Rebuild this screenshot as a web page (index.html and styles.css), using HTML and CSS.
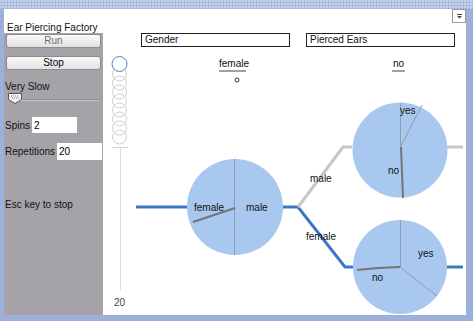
FILE: index.html
```html
<!DOCTYPE html>
<html lang="en">
<head>
  <meta charset="UTF-8">
  <title>Ear Piercing Factory</title>
  <link rel="stylesheet" href="styles.css">
</head>
<body>
  <div class="window">
    <div class="titlebar"></div>
    <div class="content">
      <div class="side">
        <div class="app-title">Ear Piercing Factory</div>
        <div class="panel">
          <button class="btn btn-off">Run</button>
          <button class="btn btn-stop">Stop</button>
          <div class="speed">Very Slow</div>
          <svg class="slider" width="95" height="11" viewBox="0 0 95 11">
            <line x1="2" y1="6.5" x2="92" y2="6.5" stroke="#8e8c90" stroke-width="1"/>
            <line x1="2" y1="7.5" x2="92" y2="7.5" stroke="#c4c2c6" stroke-width="1"/>
            <polygon points="0.5,0.5 13.5,0.5 13.5,6.5 7,10.5 0.5,6.5" fill="#f4f4f4" stroke="#555"/>
            <g fill="#777">
              <rect x="3" y="2.5" width="1" height="1"/><rect x="5" y="2.5" width="1" height="1"/>
              <rect x="7" y="2.5" width="1" height="1"/><rect x="9" y="2.5" width="1" height="1"/>
              <rect x="4" y="4.5" width="1" height="1"/><rect x="6" y="4.5" width="1" height="1"/>
              <rect x="8" y="4.5" width="1" height="1"/><rect x="10" y="4.5" width="1" height="1"/>
            </g>
          </svg>
          <label class="field">Spins<input class="num" value="2"></label>
          <label class="field field-reps">Repetitions<input class="num" value="20"></label>
          <div class="esc">Esc key to stop</div>
        </div>
      </div>

      <div class="main">
        <svg class="tree" width="363" height="306" viewBox="0 0 363 306">
          <!-- spin counter -->
          <g fill="none" stroke="#cfcfcf">
            <circle cx="16.5" cy="128" r="7"/>
            <circle cx="16.5" cy="119" r="7"/>
            <circle cx="16.5" cy="110" r="7"/>
            <circle cx="16.5" cy="101" r="7"/>
            <circle cx="16.5" cy="92" r="7"/>
            <circle cx="16.5" cy="83" r="7"/>
            <circle cx="16.5" cy="74" r="7"/>
            <circle cx="16.5" cy="65" r="7"/>
          </g>
          <circle cx="16.5" cy="55" r="7.5" fill="#fff" stroke="#4a86d0"/>
          <line x1="9" y1="138.5" x2="25" y2="138.5" stroke="#d4d4d4"/>
          <line x1="17.5" y1="138" x2="17.5" y2="282" stroke="#dedede"/>
          <text x="11" y="297" class="count">20</text>

          <!-- current values -->
          <text x="116" y="58">female</text>
          <line x1="116" y1="62" x2="143" y2="62" stroke="#a0a0a0" stroke-width="2"/>
          <circle cx="134" cy="71" r="2" fill="none" stroke="#333"/>
          <text x="290" y="58">no</text>
          <line x1="289" y1="62" x2="302" y2="62" stroke="#a0a0a0" stroke-width="2"/>

          <!-- branches -->
          <polyline points="33,198 84,198" class="edge-on"/>
          <polyline points="180,198 195,198 242,258 250,258" class="edge-on"/>
          <polyline points="195,198 240,138 249,138" class="edge-off"/>
          <polyline points="344,138 360,138" class="edge-off"/>
          <polyline points="344,258 360,258" class="edge-on"/>
          <text x="207" y="173">male</text>
          <text x="203" y="231">female</text>

          <!-- gender pie -->
          <circle cx="132" cy="198" r="48" class="pie"/>
          <line x1="131.5" y1="150" x2="131.5" y2="246" class="slice"/>
          <line x1="132" y1="199" x2="90" y2="213" class="needle"/>
          <text x="91" y="202">female</text>
          <text x="143" y="202">male</text>

          <!-- pierced ears, male -->
          <circle cx="297" cy="141" r="47.5" class="pie"/>
          <line x1="297.5" y1="141" x2="297.5" y2="94" class="slice"/>
          <line x1="297.5" y1="138" x2="319" y2="96" class="slice"/>
          <line x1="298" y1="138" x2="300" y2="189" class="needle"/>
          <text x="297" y="105">yes</text>
          <text x="285" y="165">no</text>

          <!-- pierced ears, female -->
          <circle cx="297" cy="258" r="47" class="pie"/>
          <line x1="297.5" y1="258" x2="297.5" y2="211" class="slice"/>
          <line x1="297" y1="258" x2="334" y2="287" class="slice"/>
          <polyline points="297,258 275,259 254,261" class="needle"/>
          <text x="315" y="248">yes</text>
          <text x="269" y="272">no</text>
        </svg>

        <div class="toolbar">
          <button class="menu-btn">
            <svg width="11" height="11" viewBox="0 0 11 11">
              <line x1="3" y1="3.5" x2="8" y2="3.5" stroke="#444"/>
              <polygon points="3,5 8,5 5.5,7.5" fill="#444"/>
            </svg>
          </button>
        </div>
        <div class="headers">
          <div class="attr">Gender</div>
          <div class="attr">Pierced Ears</div>
        </div>
      </div>
    </div>
  </div>
</body>
</html>
```

FILE: styles.css
```css
body {
  margin: 0;
  font-family: "Liberation Sans", Arial, sans-serif;
  font-size: 10px;
  color: #111;
}

.window {
  width: 473px;
  height: 321px;
  background: #9cb0da;
  display: flex;
  flex-direction: column;
}

.titlebar {
  height: 9px;
  background-color: #c2d0ec;
  background-image: radial-gradient(circle, #8aa2d4 0.7px, transparent 1.1px);
  background-size: 3px 3px;
  background-position: 0 1px;
}

.content {
  flex: 1;
  display: flex;
  margin: 0 7px 6px 4px;
  background: #fff;
}

.side {
  width: 99px;
  display: flex;
  flex-direction: column;
}

.app-title {
  height: 24px;
  box-sizing: border-box;
  padding: 13px 0 0 3px;
  line-height: 11px;
}

.panel {
  flex: 1;
  background: #a5a3a7;
  display: flex;
  flex-direction: column;
  padding: 0 2px 0 1px;
}

.btn {
  height: 14px;
  margin-top: 1px;
  margin-left: 1px;
  width: 95px;
  padding: 0;
  border: 1px solid #8d8b8f;
  border-radius: 3px;
  background: linear-gradient(#fbfbfb, #e2e2e2);
  font: inherit;
  line-height: 12px;
  color: #000;
}

.btn-off {
  color: #6d6d6d;
}

.btn-stop {
  margin-top: 8px;
}

.speed {
  margin-top: 11px;
  line-height: 12px;
}

.slider {
  display: block;
  margin-left: 3px;
}

.field {
  display: flex;
  align-items: center;
  margin-top: 13px;
  height: 16px;
}

.field-reps {
  margin-top: 10px;
  height: 17px;
}

.num {
  width: 45px;
  height: 100%;
  box-sizing: border-box;
  margin-left: 2px;
  border: none;
  padding: 0 2px;
  font: inherit;
  background: #fff;
}

.esc {
  margin-top: 39px;
  line-height: 12px;
}

.main {
  flex: 1;
  position: relative;
  display: flex;
  flex-direction: column;
}

.tree {
  position: absolute;
  left: 0;
  top: 0;
  font-family: "Liberation Sans", Arial, sans-serif;
  font-size: 10px;
}

.tree text {
  fill: #111;
}

.tree .count {
  fill: #444;
}

.edge-on {
  fill: none;
  stroke: #3a78c4;
  stroke-width: 3;
}

.edge-off {
  fill: none;
  stroke: #c6c6c6;
  stroke-width: 3;
}

.pie {
  fill: #a9c8ef;
}

.slice {
  stroke: #8d9cb0;
  stroke-width: 1;
}

.needle {
  fill: none;
  stroke: #747474;
  stroke-width: 2;
}

.toolbar {
  position: relative;
  display: flex;
  justify-content: flex-end;
  height: 14px;
}

.menu-btn {
  width: 14px;
  height: 14px;
  padding: 0;
  border: 1px solid #9a9a9a;
  background: #fff;
  display: flex;
  align-items: center;
  justify-content: center;
}

.headers {
  position: relative;
  display: flex;
  gap: 16px;
  margin-top: 10px;
  padding-left: 38px;
}

.attr {
  width: 149px;
  height: 14px;
  box-sizing: border-box;
  border: 1px solid #222;
  padding-left: 3px;
  line-height: 12px;
  background: #fff;
}
```
